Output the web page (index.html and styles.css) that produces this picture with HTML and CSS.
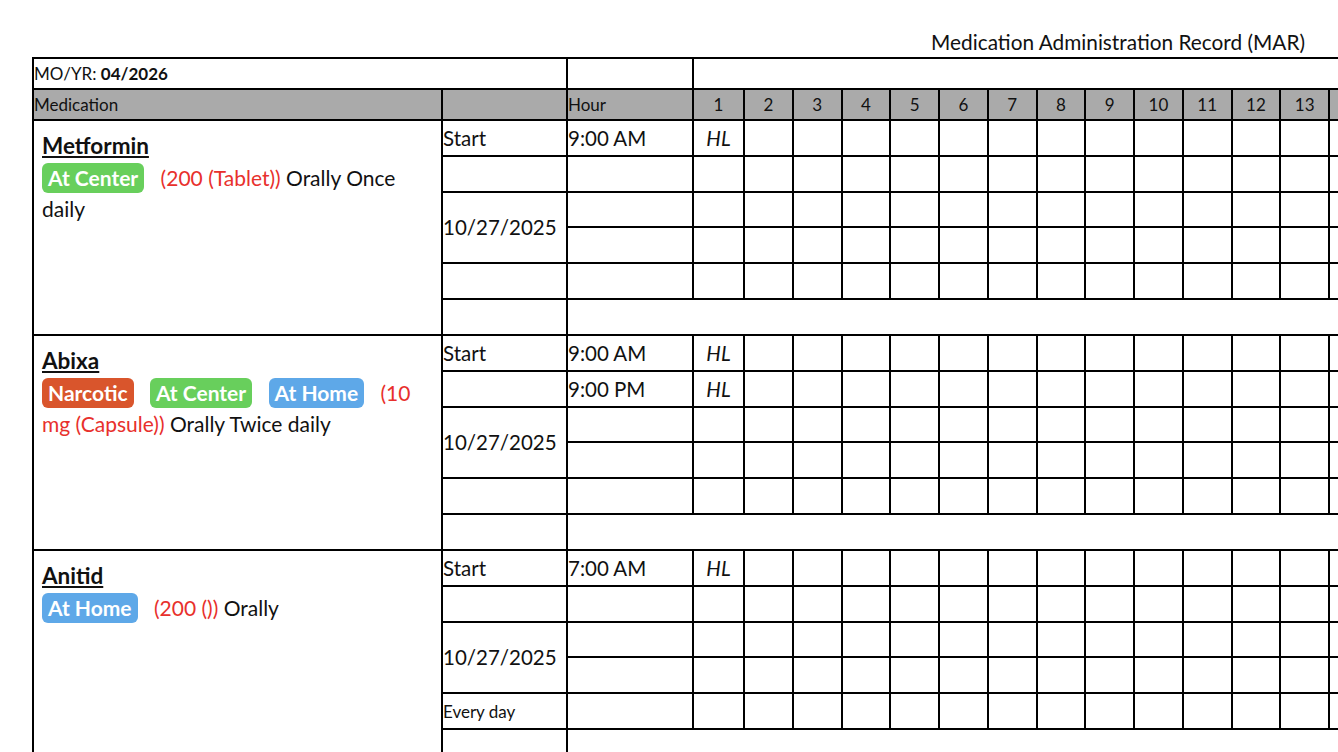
FILE: index.html
```html
<!DOCTYPE html>
<html lang="en">
<head>
<meta charset="utf-8">
<title>Medication Administration Record (MAR)</title>
<link rel="stylesheet" href="styles.css">
</head>
<body>
<div class="page">
  <div class="title">Medication Administration Record (MAR)</div>
  <table class="mar">
    <colgroup>
      <col class="c-med"><col class="c-lbl"><col class="c-hr"><col class="c-d1"><col class="c-d" span="30">
    </colgroup>
    <tbody>
      <tr class="r-top"><td colspan="2" class="sm">MO/YR: <b>04/2026</b></td><td></td><td colspan="31"></td></tr>
      <tr class="r-top"><th>Medication</th><th></th><th>Hour</th><th class="d">1</th><th class="d">2</th><th class="d">3</th><th class="d">4</th><th class="d">5</th><th class="d">6</th><th class="d">7</th><th class="d">8</th><th class="d">9</th><th class="d">10</th><th class="d">11</th><th class="d">12</th><th class="d">13</th><th class="d">14</th><th class="d">15</th><th class="d">16</th><th class="d">17</th><th class="d">18</th><th class="d">19</th><th class="d">20</th><th class="d">21</th><th class="d">22</th><th class="d">23</th><th class="d">24</th><th class="d">25</th><th class="d">26</th><th class="d">27</th><th class="d">28</th><th class="d">29</th><th class="d">30</th><th class="d">31</th></tr>

      <!-- Metformin -->
      <tr class="b"><td class="med" rowspan="6"><div class="name">Metformin</div><div class="desc"><span class="badge green">At Center</span> <span class="dose">(200 (Tablet))</span> Orally Once daily</div></td><td class="lbl">Start</td><td class="hr">9:00 AM</td><td class="hl">HL</td><td></td><td></td><td></td><td></td><td></td><td></td><td></td><td></td><td></td><td></td><td></td><td></td><td></td><td></td><td></td><td></td><td></td><td></td><td></td><td></td><td></td><td></td><td></td><td></td><td></td><td></td><td></td><td></td><td></td><td></td></tr>
      <tr class="b"><td class="lbl"></td><td class="hr"></td><td></td><td></td><td></td><td></td><td></td><td></td><td></td><td></td><td></td><td></td><td></td><td></td><td></td><td></td><td></td><td></td><td></td><td></td><td></td><td></td><td></td><td></td><td></td><td></td><td></td><td></td><td></td><td></td><td></td><td></td><td></td></tr>
      <tr class="b"><td class="lbl" rowspan="2">10/27/2025</td><td class="hr"></td><td></td><td></td><td></td><td></td><td></td><td></td><td></td><td></td><td></td><td></td><td></td><td></td><td></td><td></td><td></td><td></td><td></td><td></td><td></td><td></td><td></td><td></td><td></td><td></td><td></td><td></td><td></td><td></td><td></td><td></td><td></td></tr>
      <tr class="b"><td class="hr"></td><td></td><td></td><td></td><td></td><td></td><td></td><td></td><td></td><td></td><td></td><td></td><td></td><td></td><td></td><td></td><td></td><td></td><td></td><td></td><td></td><td></td><td></td><td></td><td></td><td></td><td></td><td></td><td></td><td></td><td></td><td></td></tr>
      <tr class="b"><td class="lbl"></td><td class="hr"></td><td></td><td></td><td></td><td></td><td></td><td></td><td></td><td></td><td></td><td></td><td></td><td></td><td></td><td></td><td></td><td></td><td></td><td></td><td></td><td></td><td></td><td></td><td></td><td></td><td></td><td></td><td></td><td></td><td></td><td></td><td></td></tr>
      <tr class="b"><td class="lbl"></td><td colspan="32"></td></tr>

      <!-- Abixa -->
      <tr class="b"><td class="med" rowspan="6"><div class="name">Abixa</div><div class="desc"><span class="badge orange">Narcotic</span> <span class="badge green">At Center</span> <span class="badge blue">At Home</span> <span class="dose">(10 mg (Capsule))</span> Orally Twice daily</div></td><td class="lbl">Start</td><td class="hr">9:00 AM</td><td class="hl">HL</td><td></td><td></td><td></td><td></td><td></td><td></td><td></td><td></td><td></td><td></td><td></td><td></td><td></td><td></td><td></td><td></td><td></td><td></td><td></td><td></td><td></td><td></td><td></td><td></td><td></td><td></td><td></td><td></td><td></td><td></td></tr>
      <tr class="b"><td class="lbl"></td><td class="hr">9:00 PM</td><td class="hl">HL</td><td></td><td></td><td></td><td></td><td></td><td></td><td></td><td></td><td></td><td></td><td></td><td></td><td></td><td></td><td></td><td></td><td></td><td></td><td></td><td></td><td></td><td></td><td></td><td></td><td></td><td></td><td></td><td></td><td></td><td></td></tr>
      <tr class="b"><td class="lbl" rowspan="2">10/27/2025</td><td class="hr"></td><td></td><td></td><td></td><td></td><td></td><td></td><td></td><td></td><td></td><td></td><td></td><td></td><td></td><td></td><td></td><td></td><td></td><td></td><td></td><td></td><td></td><td></td><td></td><td></td><td></td><td></td><td></td><td></td><td></td><td></td><td></td></tr>
      <tr class="b"><td class="hr"></td><td></td><td></td><td></td><td></td><td></td><td></td><td></td><td></td><td></td><td></td><td></td><td></td><td></td><td></td><td></td><td></td><td></td><td></td><td></td><td></td><td></td><td></td><td></td><td></td><td></td><td></td><td></td><td></td><td></td><td></td><td></td></tr>
      <tr class="b"><td class="lbl"></td><td class="hr"></td><td></td><td></td><td></td><td></td><td></td><td></td><td></td><td></td><td></td><td></td><td></td><td></td><td></td><td></td><td></td><td></td><td></td><td></td><td></td><td></td><td></td><td></td><td></td><td></td><td></td><td></td><td></td><td></td><td></td><td></td><td></td></tr>
      <tr class="b"><td class="lbl"></td><td colspan="32"></td></tr>

      <!-- Anitid -->
      <tr class="b"><td class="med" rowspan="6"><div class="name">Anitid</div><div class="desc"><span class="badge blue">At Home</span> <span class="dose">(200 ())</span> Orally</div></td><td class="lbl">Start</td><td class="hr">7:00 AM</td><td class="hl">HL</td><td></td><td></td><td></td><td></td><td></td><td></td><td></td><td></td><td></td><td></td><td></td><td></td><td></td><td></td><td></td><td></td><td></td><td></td><td></td><td></td><td></td><td></td><td></td><td></td><td></td><td></td><td></td><td></td><td></td><td></td></tr>
      <tr class="b"><td class="lbl"></td><td class="hr"></td><td></td><td></td><td></td><td></td><td></td><td></td><td></td><td></td><td></td><td></td><td></td><td></td><td></td><td></td><td></td><td></td><td></td><td></td><td></td><td></td><td></td><td></td><td></td><td></td><td></td><td></td><td></td><td></td><td></td><td></td><td></td></tr>
      <tr class="b"><td class="lbl" rowspan="2">10/27/2025</td><td class="hr"></td><td></td><td></td><td></td><td></td><td></td><td></td><td></td><td></td><td></td><td></td><td></td><td></td><td></td><td></td><td></td><td></td><td></td><td></td><td></td><td></td><td></td><td></td><td></td><td></td><td></td><td></td><td></td><td></td><td></td><td></td><td></td></tr>
      <tr class="b"><td class="hr"></td><td></td><td></td><td></td><td></td><td></td><td></td><td></td><td></td><td></td><td></td><td></td><td></td><td></td><td></td><td></td><td></td><td></td><td></td><td></td><td></td><td></td><td></td><td></td><td></td><td></td><td></td><td></td><td></td><td></td><td></td><td></td></tr>
      <tr class="b"><td class="lbl sm">Every day</td><td class="hr"></td><td></td><td></td><td></td><td></td><td></td><td></td><td></td><td></td><td></td><td></td><td></td><td></td><td></td><td></td><td></td><td></td><td></td><td></td><td></td><td></td><td></td><td></td><td></td><td></td><td></td><td></td><td></td><td></td><td></td><td></td><td></td></tr>
      <tr class="b"><td class="lbl"></td><td colspan="32"></td></tr>
    </tbody>
  </table>
</div>
</body>
</html>
```

FILE: styles.css
```css
html, body {
  margin: 0;
  padding: 0;
  overflow: hidden;
  background: #fff;
}

body {
  font-family: Lato, "Noto Sans", sans-serif;
  color: #111;
}

.page {
  padding: 27px 0 0 32px;
}

.title {
  text-align: right;
  padding-right: 33px;
  font-size: 20.8px;
  line-height: 30px;
}

.mar {
  border-collapse: collapse;
  table-layout: fixed;
  width: 2173.5px;
}

.c-med { width: 409px; }
.c-lbl { width: 125px; }
.c-hr { width: 126px; }
.c-d1 { width: 51px; }
.c-d { width: 48.75px; }

.mar td,
.mar th {
  border: 2px solid #000;
  padding: 0;
  vertical-align: middle;
  text-align: left;
  font-size: 20.5px;
  white-space: nowrap;
}

.r-top { height: 31px; }
.b { height: 35.833px; }

.mar th {
  background: #aaa;
  font-weight: normal;
  font-size: 17px;
}

.mar th.d { text-align: center; }

.mar td.sm { font-size: 17px; }

.mar td.hl {
  text-align: center;
  font-style: italic;
}

.mar td.med {
  vertical-align: top;
  padding: 12px 8px 0 8px;
  white-space: normal;
}

.name {
  font-size: 22.5px;
  font-weight: 700;
  text-decoration: underline;
  line-height: 26px;
}

.desc {
  font-size: 21px;
  line-height: 31px;
  margin-top: 3px;
}

.badge {
  display: inline-block;
  color: #fff;
  font-weight: 700;
  font-size: 21px;
  line-height: 30px;
  padding: 0 6px;
  border-radius: 6px;
  margin-right: 11px;
}

.green { background: #68cf5c; }
.blue { background: #5ea8e8; }
.orange { background: #d9552c; }

.dose { color: #e8302c; }
```
